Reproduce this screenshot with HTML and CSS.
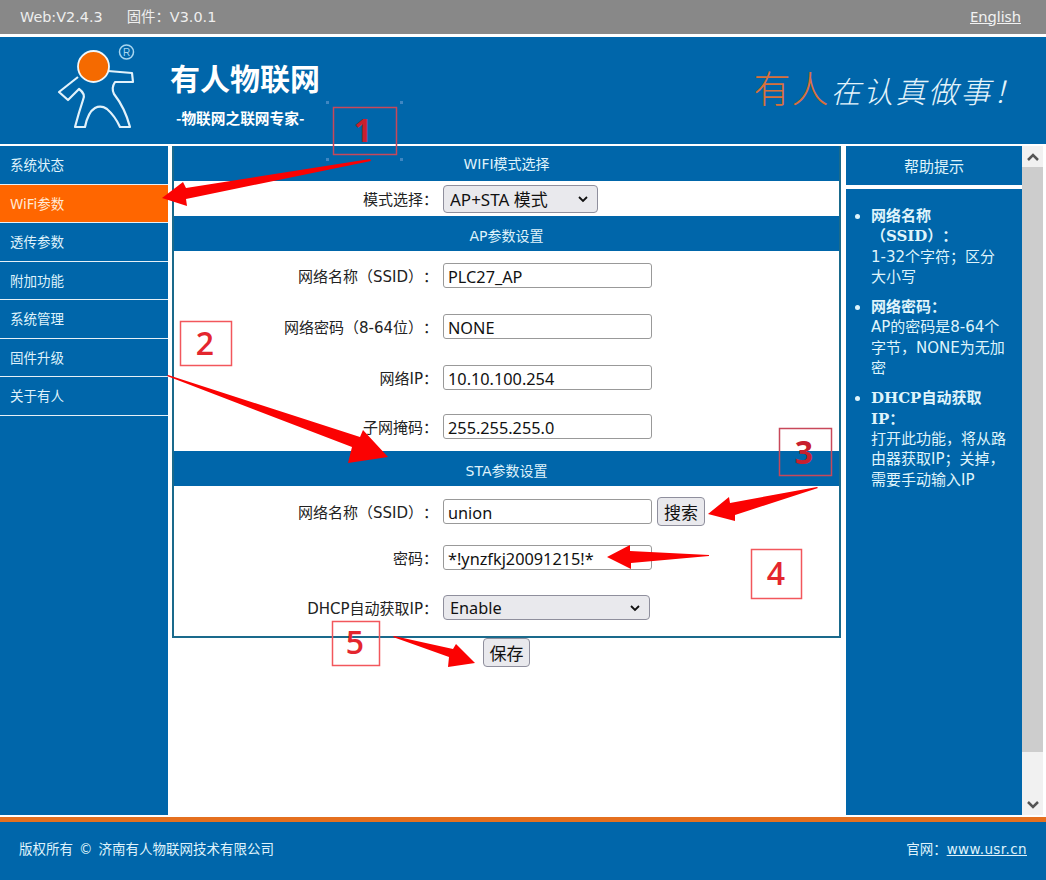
FILE: index.html
```html
<!DOCTYPE html>
<html lang="zh-CN">
<head>
<meta charset="utf-8">
<title>有人物联网</title>
<link rel="stylesheet" href="styles.css">
</head>
<body>
<div class="page">
  <div class="topbar">
    <div class="versions"><span>Web:V2.4.3</span><span>固件：V3.0.1</span></div>
    <a class="lang" href="#">English</a>
  </div>
  <header class="banner">
    <svg class="logo" width="100" height="100" viewBox="50 40 100 100">
      <path class="logo-body" d="M78 77 L59 92 L68 100 L79 89 Q86 94 83 100 Q79 112 75 127 L85 127 Q88 112 95 108 Q101 105 107 109 Q115 116 120 127 L130 127 Q125 108 114 94 Q111 88 115 82 L133 82 L132 73 L108 71"/>
      <circle class="logo-head" cx="93.500" cy="66.500" r="15.500"/>
      <circle class="logo-reg" cx="126.500" cy="52" r="7"/>
      <text class="logo-r" x="126.500" y="55.500">R</text>
    </svg>
    <div class="brand">
      <div class="brand-name">有人物联网</div>
      <div class="brand-sub">-物联网之联网专家-</div>
    </div>
    <div class="slogan"><span class="slogan-a">有人</span><span class="slogan-b">在认真做事！</span></div>
  </header>
  <div class="content">
    <nav class="sidebar">
      <a class="nav-item" href="#">系统状态</a>
      <a class="nav-item active" href="#">WiFi参数</a>
      <a class="nav-item" href="#">透传参数</a>
      <a class="nav-item" href="#">附加功能</a>
      <a class="nav-item" href="#">系统管理</a>
      <a class="nav-item" href="#">固件升级</a>
      <a class="nav-item" href="#">关于有人</a>
    </nav>
    <main class="main">
      <div class="panel">
        <div class="section-title">WIFI模式选择</div>
        <div class="mode-row">
          <label class="label">模式选择：</label>
          <select class="select select-mode"><option>AP+STA 模式</option></select>
        </div>
        <div class="section-title section-title-low">AP参数设置</div>
        <div class="form form-ap">
          <div class="row"><label class="label">网络名称（SSID）：</label><input class="input" value="PLC27_AP"></div>
          <div class="row"><label class="label">网络密码（8-64位）：</label><input class="input" value="NONE"></div>
          <div class="row"><label class="label">网络IP：</label><input class="input" value="10.10.100.254"></div>
          <div class="row row-tight"><label class="label">子网掩码：</label><input class="input" value="255.255.255.0"></div>
        </div>
        <div class="section-title section-title-low">STA参数设置</div>
        <div class="form form-sta">
          <div class="row"><label class="label">网络名称（SSID）：</label><input class="input" value="union"><button class="btn btn-search">搜索</button></div>
          <div class="row"><label class="label">密码：</label><input class="input" value="*!ynzfkj20091215!*"></div>
          <div class="row row-low"><label class="label">DHCP自动获取IP：</label><select class="select select-dhcp"><option>Enable</option></select></div>
        </div>
      </div>
      <div class="save-row"><button class="btn btn-save">保存</button></div>
    </main>
    <aside class="help">
      <div class="help-title">帮助提示</div>
      <ul class="help-list">
        <li><b>网络名称（SSID）：</b><br>1-32个字符；区分大小写</li>
        <li><b>网络密码：</b><br>AP的密码是8-64个字节，NONE为无加密</li>
        <li><b>DHCP自动获取<br>IP：</b><br>打开此功能，将从路由器获取IP；关掉，需要手动输入IP</li>
      </ul>
    </aside>
    <div class="scrollbar">
      <div class="scroll-btn"><svg width="14" height="10" viewBox="0 0 14 10"><path class="chev" d="M2 8 L7 3 L12 8"/></svg></div>
      <div class="scroll-track"><div class="scroll-thumb"></div></div>
      <div class="scroll-btn"><svg width="14" height="10" viewBox="0 0 14 10"><path class="chev" d="M2 2 L7 7 L12 2"/></svg></div>
    </div>
  </div>
  <footer class="footer">
    <span>版权所有<span class="copy">©</span>济南有人物联网技术有限公司</span>
    <span>官网：<a class="site" href="#">www.usr.cn</a></span>
  </footer>
  <svg class="annotations" width="1046" height="880" viewBox="0 0 1046 880">
    <g class="handles">
      <rect x="326" y="101" width="3" height="3"/>
      <rect x="400" y="101" width="3" height="3"/>
      <rect x="326" y="158" width="3" height="3"/>
      <rect x="400" y="158" width="3" height="3"/>
    </g>
    <g class="marks">
      <rect class="mark-muted" x="333.500" y="107.500" width="63" height="47"/>
      <rect x="180.500" y="321.500" width="51" height="44"/>
      <rect class="mark-muted" x="779.500" y="428.500" width="52" height="47"/>
      <rect x="751.500" y="549.500" width="50" height="49"/>
      <rect x="332.500" y="621.500" width="47" height="44"/>
    </g>
    <g class="nums">
      <text class="num-dark" x="363" y="142">1</text>
      <text x="205" y="355">2</text>
      <text class="num-dark" x="804" y="464">3</text>
      <text x="776" y="585">4</text>
      <text x="355" y="654">5</text>
    </g>
    <g class="arrows">
      <polygon points="371,161 370,159 186,188 183,182 162,198 187,206 186,199"/>
      <polygon points="167,376 168,375 360,437 363,430 388,457 348,463 352,447"/>
      <polygon points="818,488 817,487 730,503 729,497 708,514 735,521 735,515"/>
      <polygon points="709,556 709,555 630,551 630,545 607,557 631,569 631,563"/>
      <polygon points="393,637 394,636 453,649 456,644 475,663 448,667 449,657"/>
    </g>
  </svg>
</div>
</body>
</html>
```
FILE: styles.css
```css
* { box-sizing: border-box; }
html, body { margin: 0; padding: 0; background: #fff; }
body { font-family: "DejaVu Sans", "Noto Sans CJK SC", sans-serif; text-spacing-trim: space-all; }
.page { position: relative; width: 1046px; height: 880px; overflow: hidden; display: flex; flex-direction: column; }

.topbar { height: 37px; flex: none; background: #888; border-bottom: 3px solid #fff; padding: 0 25px 3px 20px; display: flex; justify-content: space-between; align-items: center; color: #eee; font-size: 14.400px; }
.versions { display: flex; align-items: baseline; gap: 24px; }
.lang { color: #f2f2f2; font-size: 15px; font-family: "Noto Sans", sans-serif; text-decoration: underline; }

.banner { height: 109px; flex: none; background: #0066aa; border-bottom: 2px solid #fff; display: flex; align-items: flex-start; }
.logo { flex: none; margin: 3px 20px 0 50px; }
.logo-body { fill: none; stroke: #e2f2fb; stroke-width: 2.200; stroke-linejoin: round; }
.logo-head { fill: #f56a00; stroke: #eef7fc; stroke-width: 1.800; }
.logo-reg { fill: none; stroke: #a8d6f0; stroke-width: 1.500; }
.logo-r { fill: #a8d6f0; font-size: 10px; text-anchor: middle; font-family: "Liberation Sans", sans-serif; }
.brand { display: flex; flex-direction: column; color: #fff; font-weight: 700; font-family: "Noto Sans CJK SC", sans-serif; }
.brand-name { font-size: 30px; line-height: 40px; margin-top: 20px; }
.brand-sub { font-size: 14.700px; line-height: 20px; margin: 11px 0 0 6px; }
.slogan { margin-left: auto; margin-right: 21px; margin-top: 23px; display: flex; align-items: baseline; font-family: "Noto Sans CJK SC", sans-serif; font-weight: 300; }
.slogan-a { color: #d9703a; font-size: 37px; letter-spacing: 1px; margin-right: 1px; }
.slogan-b { color: #e4f4fb; font-size: 30px; font-style: italic; letter-spacing: 2.400px; }

.content { height: 669px; flex: none; display: flex; }
.sidebar { width: 168px; flex: none; background: #0066aa; display: flex; flex-direction: column; }
.nav-item { height: 38.500px; line-height: 38px; padding-left: 10px; color: #dff2fb; font-size: 13.500px; text-decoration: none; border-bottom: 1px solid #e6f0f7; }
.nav-item.active { background: #ff6600; color: #ffe9d6; }

.main { width: 678px; flex: none; padding: 0 5px 0 4px; }
.panel { border: 2px solid #1a6a8c; border-top: 0; height: 492px; display: flex; flex-direction: column; }
.section-title { height: 35px; flex: none; background: #0066aa; color: #dff2fb; font-size: 14px; line-height: 37px; text-align: center; }
.section-title-low { line-height: 41px; }
.mode-row { height: 35px; flex: none; display: flex; align-items: center; }
.form { display: flex; flex-direction: column; flex: none; }
.form-ap { height: 200px; padding-top: 12px; gap: 26px; }
.form-sta { flex: 1; padding-top: 13px; gap: 21px; }
.row { display: flex; align-items: center; height: 25px; }
.row-tight { margin-top: -2px; }
.row-low { margin-top: 4px; }
.label { width: 264px; margin-right: 5px; flex: none; text-align: right; color: #222; font-size: 15px; }
.input { width: 209px; height: 25px; padding: 2px 4px 0; font: 16.300px "Noto Sans", sans-serif; color: #111; border: 1px solid #999; border-radius: 3px; background: #fff; }
.select { appearance: none; height: 25px; padding: 0 6px; font: 16.300px "Noto Sans", "Noto Sans CJK SC", sans-serif; color: #111; border: 1px solid #8f8f9d; border-radius: 4px; background: #e9e9ed url("data:image/svg+xml,%3Csvg xmlns='http://www.w3.org/2000/svg' width='12' height='8'%3E%3Cpath d='M2 2l4 4 4-4' fill='none' stroke='%23111' stroke-width='1.800'/%3E%3C/svg%3E") no-repeat right 8px center; }
.select-mode { width: 155px; height: 28px; margin-top: 1px; font-size: 17px; }
.select-dhcp { width: 207px; }
.btn { font: 17px "Noto Sans CJK SC", sans-serif; color: #111; background: #e9e9ed; border: 1px solid #8f8f9d; border-radius: 4px; padding: 0; }
.btn-search { width: 48px; height: 29px; margin-left: 5px; }
.save-row { display: flex; justify-content: center; }
.btn-save { width: 47px; height: 29px; }

.help { width: 176px; flex: none; display: flex; flex-direction: column; gap: 4px; color: #dff4fb; font-size: 15px; }
.help-title { height: 39px; flex: none; background: #0066aa; text-align: center; line-height: 43px; }
.help-list { flex: 1; background: #0066aa; margin: 0; padding: 17px 13px 0 25px; line-height: 20.300px; }
.help-list li { margin-bottom: 10px; }
.help-list b { font-family: "DejaVu Serif", "Noto Sans CJK SC", serif; line-height: 1; }

.scrollbar { width: 21px; flex: none; display: flex; flex-direction: column; background: #f1f1f1; }
.scroll-btn { height: 21px; flex: none; display: flex; align-items: center; justify-content: center; }
.scroll-track { flex: 1; }
.scroll-thumb { height: 585px; background: #cdcdcd; }
.chev { fill: none; stroke: #555; stroke-width: 2.500; }

.footer { flex: 1; margin-top: 2px; background: #0066aa; border-top: 5px solid #e5701f; color: #dff2fb; font-size: 13.500px; padding: 0 19px 6px; display: flex; justify-content: space-between; align-items: center; }
.footer .copy { margin: 0 6px; }
.footer .site { color: inherit; text-decoration: underline; letter-spacing: 0.400px; }

.annotations { position: absolute; left: 0; top: 0; pointer-events: none; }
.handles rect { fill: #3f86c2; }
.marks rect { fill: none; stroke: #f2575c; stroke-width: 1.500; }
.marks .mark-muted { stroke: #c8485a; }
.nums text { fill: #e4262e; font: 600 32px "Open Sans", sans-serif; text-anchor: middle; }
.nums .num-dark { fill: #c8202e; font-weight: 700; }
.arrows polygon { fill: #fb0202; }
```
